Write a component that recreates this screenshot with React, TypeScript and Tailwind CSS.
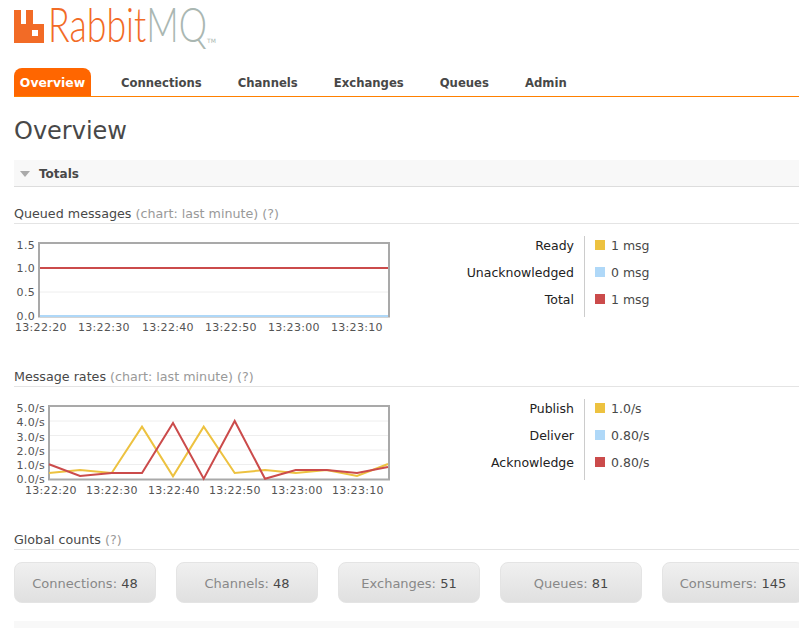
const font = "font-['DejaVu_Sans',Verdana,sans-serif]";

const tabs = ['Connections', 'Channels', 'Exchanges', 'Queues', 'Admin'];

const queued = [
  { label: 'Ready', color: 'bg-[#edc240]', value: '1 msg' },
  { label: 'Unacknowledged', color: 'bg-[#afd8f8]', value: '0 msg' },
  { label: 'Total', color: 'bg-[#cb4b4b]', value: '1 msg' },
];

const rates = [
  { label: 'Publish', color: 'bg-[#edc240]', value: '1.0/s' },
  { label: 'Deliver', color: 'bg-[#afd8f8]', value: '0.80/s' },
  { label: 'Acknowledge', color: 'bg-[#cb4b4b]', value: '0.80/s' },
];

const counts = [
  { label: 'Connections', value: 48 },
  { label: 'Channels', value: 48 },
  { label: 'Exchanges', value: 51 },
  { label: 'Queues', value: 81 },
  { label: 'Consumers', value: 145 },
];

const times1 = [
  ['13:22:20', 15],
  ['13:22:30', 78],
  ['13:22:40', 142],
  ['13:22:50', 205],
  ['13:23:00', 268],
  ['13:23:10', 331],
] as const;

const times2 = [
  ['13:22:20', 25],
  ['13:22:30', 86],
  ['13:22:40', 148],
  ['13:22:50', 209],
  ['13:23:00', 271],
  ['13:23:10', 332],
] as const;

const yellowLine =
  '49,473 80,470 111.7,473 142,426.7 173,476.3 203.7,426.7 234.7,473 265,470 295.7,473 326.7,470 357,476 388,464';
const redLine =
  '49,464.3 80,476 111.7,473 142,473 173,423 203.7,478.7 234.7,421 265,478.7 295.7,470 326.7,470 357,473 388,467';

function QueuedChart() {
  return (
    <svg viewBox="14 236 386 100" className="w-[386px] h-[100px] shrink-0" fontFamily="'DejaVu Sans', sans-serif" fontSize="11" letterSpacing="0.3">
      <line x1="39" x2="389" y1="292" y2="292" stroke="#eeeeee" />
      <rect x="39" y="243" width="350" height="73.5" fill="none" stroke="#a9a9a9" strokeWidth="2" />
      <line x1="40" x2="388" y1="268" y2="268" stroke="#cb4b4b" strokeWidth="2" />
      <line x1="40" x2="388" y1="316" y2="316" stroke="#afd8f8" strokeWidth="2" />
      {[['1.5', 249], ['1.0', 272], ['0.5', 296], ['0.0', 320]].map(([t, y]) => (
        <text key={t} x="35" y={y} textAnchor="end" fill="#545454">{t}</text>
      ))}
      {times1.map(([t, x]) => (
        <text key={t} x={x} y="331" fill="#545454">{t}</text>
      ))}
    </svg>
  );
}

function RatesChart() {
  return (
    <svg viewBox="14 399 386 100" className="w-[386px] h-[100px] shrink-0" fontFamily="'DejaVu Sans', sans-serif" fontSize="11" letterSpacing="0.3">
      {[421, 435.5, 450, 464.5].map((y) => (
        <line key={y} x1="49" x2="389" y1={y} y2={y} stroke="#eeeeee" />
      ))}
      <rect x="49" y="406" width="340" height="73.5" fill="none" stroke="#a9a9a9" strokeWidth="2" />
      <polyline points={yellowLine} fill="none" stroke="#edc240" strokeWidth="2" />
      <polyline points={redLine} fill="none" stroke="#cb4b4b" strokeWidth="2" />
      {[['5.0/s', 412], ['4.0/s', 426], ['3.0/s', 441], ['2.0/s', 455], ['1.0/s', 469], ['0.0/s', 483]].map(([t, y]) => (
        <text key={t} x="45" y={y} textAnchor="end" fill="#545454">{t}</text>
      ))}
      {times2.map(([t, x]) => (
        <text key={t} x={x} y="494" fill="#545454">{t}</text>
      ))}
    </svg>
  );
}

function Legend({ rows }: { rows: { label: string; color: string; value: string }[] }) {
  return (
    <div className="flex h-[81px] text-[12.5px]">
      <div className="w-[184px] pr-[10px] text-right text-[#222]">
        <div className="-mt-[4px]">
          {rows.map((r) => (
            <div key={r.label} className="h-[27px] leading-[27px]">{r.label}</div>
          ))}
        </div>
      </div>
      <div className="border-l border-[#cccccc] pl-[10px] text-[#484848]">
        <div className="-mt-[4px]">
          {rows.map((r) => (
            <div key={r.label} className="h-[27px] leading-[28px] flex items-center">
              <span className={`w-[10px] h-[10px] mr-[6px] -mt-[2px] ${r.color}`} />
              {r.value}
            </div>
          ))}
        </div>
      </div>
    </div>
  );
}

function SectionTitle({ title, extra }: { title: string; extra: string }) {
  return (
    <h3 className="h-[20px] text-[12.7px] leading-[22px] text-[#484848] border-b border-[#e4e4e4] box-content">
      {title} <span className="text-[#999]">{extra}</span>
    </h3>
  );
}

export default function App() {
  return (
    <div className={`w-[799px] h-[628px] overflow-hidden bg-white pl-[14px] ${font}`}>
      <div className="h-[68px] pt-[10px] flex items-start">
        <svg width="30" height="33" viewBox="0 0 30 33" className="shrink-0">
          <path
            fillRule="evenodd"
            d="M0 0h7v14h5V0h7v14h11v19H0z M18 20v6h6v-6z"
            fill="#f26b26"
          />
        </svg>
        <div className="w-[158px] shrink-0 ml-[4px] -mt-[9px]">
          <div className="inline-block origin-left scale-x-[0.76] whitespace-nowrap text-[47px] leading-[46px] font-['Lato',sans-serif] font-light">
            <span className="text-[#f26b26]">Rabbit</span>
            <span className="text-[#aab7b2]">MQ</span>
          </div>
        </div>
        <span className="mt-[26px] ml-[1px] text-[6px] text-[#aab7b2]">TM</span>
      </div>

      <nav className="h-[29px] flex items-stretch border-b border-[#ff8000] text-[11.65px] font-bold text-[#484848]">
        <a className="w-[77px] pt-[2px] flex items-center justify-center bg-[#ff6600] text-white text-[12.4px] rounded-t-[8px]">Overview</a>
        <div className="ml-[30px] flex gap-[36px]">
          {tabs.map((tab) => (
            <a key={tab} className="pt-[3px] flex items-center">{tab}</a>
          ))}
        </div>
      </nav>

      <h1 className="mt-[19px] h-[30px] text-[24px] leading-[30px] font-normal text-[#484848]">Overview</h1>

      <div className="mt-[14px] h-[27px] pt-[1px] flex items-center bg-[#f8f8f8] border-b border-[#dddddd] text-[12px] font-bold text-[#484848]">
        <span className="ml-[6px] w-0 h-0 border-x-[5.5px] border-x-transparent border-t-[6px] border-t-[#aaaaaa]" />
        <span className="ml-[9px]">Totals</span>
      </div>

      <div className="mt-[16px]">
        <SectionTitle title="Queued messages" extra="(chart: last minute) (?)" />
        <div className="mt-[12px] flex items-start">
          <QueuedChart />
          <Legend rows={queued} />
        </div>
      </div>

      <div className="mt-[30px]">
        <SectionTitle title="Message rates" extra="(chart: last minute) (?)" />
        <div className="mt-[12px] flex items-start">
          <RatesChart />
          <Legend rows={rates} />
        </div>
      </div>

      <div className="mt-[30px]">
        <SectionTitle title="Global counts" extra="(?)" />
        <div className="mt-[12px] flex gap-[20px]">
          {counts.map((c) => (
            <div
              key={c.label}
              className="w-[142px] h-[41px] pt-[2px] shrink-0 flex items-center justify-center rounded-[8px] border border-[#e4e4e4] bg-gradient-to-b from-[#f0f0f0] to-[#e0e0e0] text-[13px] text-[#888]"
            >
              {c.label}:&nbsp;<span className="text-[#484848]">{c.value}</span>
            </div>
          ))}
        </div>
      </div>

      <div className="mt-[18px] h-[20px] bg-[#f8f8f8]" />
    </div>
  );
}
